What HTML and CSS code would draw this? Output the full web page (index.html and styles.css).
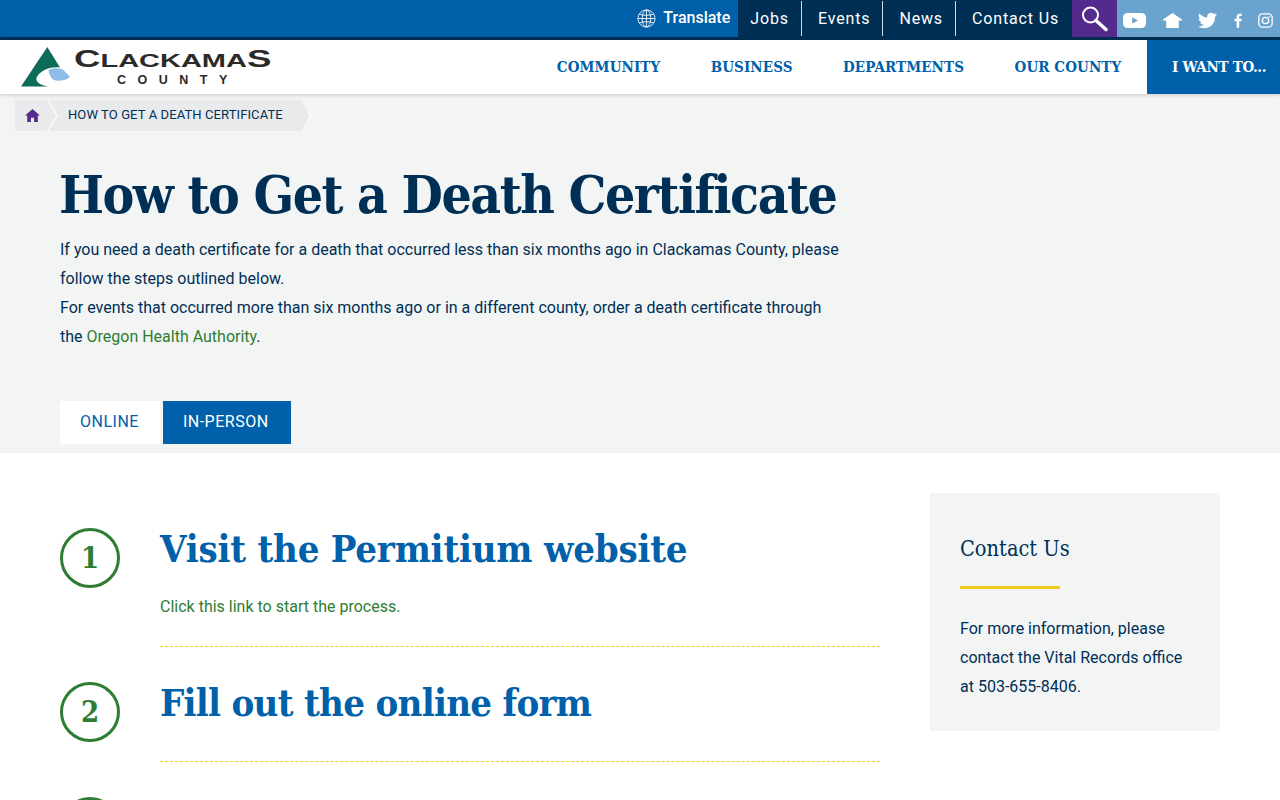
FILE: index.html
```html
<!DOCTYPE html>
<html lang="en">
<head>
<meta charset="utf-8">
<title>How to Get a Death Certificate</title>
<link rel="stylesheet" href="styles.css">
</head>
<body>
<header class="topbar">
  <a class="translate"><svg class="globe" viewBox="0 0 20 20" width="19" height="19"><g fill="none" stroke="#fff" stroke-width=".9"><circle cx="10" cy="10" r="9"/><ellipse cx="10" cy="10" rx="4.500" ry="9"/><path d="M10 1v18M1 10h18M2.500 5.500c4 1.500 11 1.500 15 0M2.500 14.500c4-1.500 11-1.500 15 0"/></g></svg><span class="translate-label">Translate</span></a>
  <nav class="utility">
    <a class="util-link first">Jobs</a>
    <a class="util-link">Events</a>
    <a class="util-link">News</a>
    <a class="util-link last">Contact Us</a>
  </nav>
  <a class="search"><svg viewBox="0 0 28 28" width="28" height="28"><circle cx="10.500" cy="10" r="7.500" fill="none" stroke="#fff" stroke-width="2"/><path d="M16 15.500l10 9" stroke="#fff" stroke-width="3.400" stroke-linecap="round"/></svg></a>
  <div class="social">
    <svg viewBox="0 0 23 15" width="23" height="15"><rect width="23" height="15" rx="4.500" fill="#fff"/><path d="M9.200 4.300l5.600 3.200-5.600 3.200z" fill="#6ba3cf"/></svg>
    <svg viewBox="0 0 19 15" width="19" height="15"><path d="M9.500 0L19 6.500V7.500H15.800V15H3.200V7.500H0V6.500z" fill="#fff"/></svg>
    <svg viewBox="0 0 24 24" width="19" height="19"><path fill="#fff" d="M23.950 4.570a10 10 0 0 1-2.820.770 4.960 4.960 0 0 0 2.160-2.720c-.950.550-2 .950-3.130 1.190a4.920 4.920 0 0 0-8.380 4.480C7.690 8.090 4.070 6.130 1.640 3.160a4.820 4.820 0 0 0-.67 2.480c0 1.710.870 3.210 2.190 4.100a4.900 4.900 0 0 1-2.230-.620v.060a4.920 4.920 0 0 0 3.950 4.830 5 5 0 0 1-2.210.080 4.940 4.940 0 0 0 4.600 3.420A9.870 9.870 0 0 1 0 19.540a14 14 0 0 0 7.560 2.210c9.050 0 14-7.500 14-13.980 0-.210 0-.420-.020-.630a9.940 9.940 0 0 0 2.460-2.550z"/></svg>
    <svg viewBox="0 0 10 18" width="8" height="15"><path fill="#fff" d="M6.500 18V10h2.700l.400-3.100H6.500V5c0-.900.250-1.500 1.550-1.500H9.700V.700C9.400.660 8.400.600 7.300.600 4.900.600 3.300 2 3.300 4.700v2.200H.600V10h2.700v8z"/></svg>
    <svg viewBox="0 0 18 18" width="15" height="15"><g fill="none" stroke="#fff" stroke-width="1.600"><rect x="1" y="1" width="16" height="16" rx="4.500"/><circle cx="9" cy="9" r="3.800"/></g><circle cx="13.500" cy="4.500" r="1" fill="#fff"/></svg>
  </div>
</header>

<div class="mainnav">
  <a class="logo">
    <svg class="logo-mark" viewBox="0 0 50 40" width="50" height="40"><path d="M26.300 0L39 20.500C29 19 18 24 15.500 31C14.500 35 20 38.500 27 39.500H0z" fill="#0d6b5a"/><path d="M27.500 23C33 20.500 40 21 43 23.500L49 30C44 34 36 35 32 32.500C29.500 30.500 28 27 27.500 23z" fill="#8dbde6"/></svg>
    <span class="logo-text"><span class="logo-top">C<small>LACKAMA</small>S</span><span class="logo-bottom">COUNTY</span></span>
  </a>
  <nav class="primary">
    <a class="primary-link">COMMUNITY</a>
    <a class="primary-link">BUSINESS</a>
    <a class="primary-link">DEPARTMENTS</a>
    <a class="primary-link">OUR COUNTY</a>
    <a class="iwant">I WANT TO...</a>
  </nav>
</div>

<section class="hero">
  <div class="crumbs">
    <a class="crumb-home"><svg viewBox="0 0 16 14" width="15" height="13"><path d="M8 0l8 7h-2.300v7H9.700V9.500H6.300V14H2.300V7H0z" fill="#542a8c"/></svg></a>
    <span class="crumb-current">HOW TO GET A DEATH CERTIFICATE</span>
  </div>
  <div class="hero-body">
    <h1 class="page-title">How to Get a Death Certificate</h1>
    <p class="intro">If you need a death certificate for a death that occurred less than six months ago in Clackamas County, please follow the steps outlined below.<br>For events that occurred more than six months ago or in a different county, order a death certificate through the <a class="link">Oregon Health Authority</a>.</p>
    <div class="tabs">
      <a class="tab">ONLINE</a>
      <a class="tab active">IN-PERSON</a>
    </div>
  </div>
</section>

<main class="content">
  <div class="steps">
    <article class="step">
      <div class="num">1</div>
      <div class="step-body">
        <h2 class="step-title wide">Visit the Permitium website</h2>
        <p class="step-text"><a class="link">Click this link to start the process.</a></p>
      </div>
    </article>
    <article class="step">
      <div class="num">2</div>
      <div class="step-body short">
        <h2 class="step-title tight">Fill out the online form</h2>
      </div>
    </article>
    <article class="step">
      <div class="num"></div>
    </article>
  </div>
  <aside class="contact">
    <h3 class="contact-title">Contact Us</h3>
    <div class="rule"></div>
    <p class="contact-text">For more information, please contact the Vital Records office at 503-655-8406.</p>
  </aside>
</main>
</body>
</html>
```
FILE: styles.css
```css
* { box-sizing: border-box; }
html, body { margin: 0; padding: 0; }
body {
  font-family: Roboto, "Liberation Sans", sans-serif;
  color: #002f56;
  background: #fff;
  overflow: hidden;
  height: 800px;
}
a { color: inherit; text-decoration: none; }

.topbar {
  height: 40px;
  display: flex;
  justify-content: flex-end;
  background: #0060a9;
  border-bottom: 3px solid #002f56;
  color: #fff;
}
.translate {
  display: flex;
  align-items: center;
  gap: 7px;
  width: 101px;
  font-size: 16px;
  font-weight: 500;
}
.translate-label { padding-bottom: 2px; }
.globe { flex: none; }
.utility { display: flex; background: #002f56; padding: 0 13px 0 0; height: 37px; }
.util-link {
  display: flex;
  align-items: center;
  padding: 0 12px 0 16px;
  margin: 1px 0;
  border-right: 1px solid #cdd8e2;
  font-size: 16px;
  letter-spacing: 0.85px;
}
.util-link.first { padding-left: 12px; }
.util-link.last { border-right: 0; padding-right: 0; }
.search {
  width: 45px;
  background: #542a8c;
  display: flex;
  align-items: center;
  justify-content: center;
  padding-right: 2px;
}
.social {
  width: 163px;
  background: #6ba3cf;
  display: flex;
  align-items: center;
  padding: 3px 7px 0 6px;
  justify-content: space-between;
}

.mainnav {
  height: 54px;
  display: flex;
  justify-content: space-between;
  background: #fff;
  box-shadow: 0 1px 4px rgba(0,0,0,.18);
  position: relative;
}
.logo { display: flex; align-items: flex-start; padding: 7px 0 0 21px; }
.logo-mark { flex: none; }
.logo-text { display: flex; flex-direction: column; margin-left: 3px; padding-top: 1px; color: #2b2a29; font-family: "Liberation Sans", sans-serif; font-weight: 700; }
.logo-top {
  font-size: 24px;
  line-height: 22px;
  transform: scaleX(1.525);
  transform-origin: left;
  white-space: nowrap;
}
.logo-top small { font-size: 19px; }
.logo-bottom { font-size: 12.500px; letter-spacing: 11.500px; line-height: 14px; margin: 1px 0 0 43px; white-space: nowrap; }
.primary { display: flex; align-items: stretch; }
.primary-link {
  display: flex;
  align-items: center;
  padding: 0 25.750px 1px 24.750px;
  color: #0060a9;
  font-family: "DejaVu Serif", "Liberation Serif", serif;
  font-stretch: condensed;
  font-weight: 700;
  font-size: 15px;
  letter-spacing: .1px;
}
.iwant {
  display: flex;
  align-items: center;
  width: 133px;
  padding: 0 0 1px 25px;
  background: #0060a9;
  color: #fff;
  font-family: "DejaVu Serif", "Liberation Serif", serif;
  font-stretch: condensed;
  font-weight: 700;
  font-size: 15px;
  letter-spacing: -.3px;
  white-space: nowrap;
}

.hero { height: 359px; background: #f3f5f5; padding: 6px 0 0 15px; }
.crumbs { display: flex; height: 31px; width: max-content; background: #e8eaeb; position: relative; }
.crumb-home { width: 32px; display: flex; align-items: center; justify-content: center; padding-left: 2px; }
.crumb-current {
  display: flex;
  align-items: center;
  padding: 0 19px 2px 21px;
  font-size: 13px;
  font-weight: 400;
  letter-spacing: .1px;
  height: 31px;
}
.crumbs::before, .crumbs::after, .crumb-current::after {
  content: "";
  position: absolute;
  top: 0;
  height: 31px;
}
.crumbs::before {
  left: 32px;
  width: 12px;
  background: #f7f8f8;
  clip-path: polygon(0 0, 2px 0, 11px 50%, 2px 100%, 0 100%, 9px 50%);
}
.crumbs::after {
  right: -8px;
  width: 8px;
  background: #e8eaeb;
  clip-path: polygon(0 0, 100% 50%, 0 100%);
}
.crumb-current::after {
  right: -10px;
  width: 10px;
  background: #fafbfb;
  clip-path: polygon(0 0, 100% 50%, 0 100%);
}
.hero-body { padding: 0 0 0 45px; }
.page-title {
  margin: 31px 0 0 -1px;
  font-family: "DejaVu Serif", "Liberation Serif", serif;
  font-stretch: condensed;
  font-weight: 700;
  font-size: 53px;
  line-height: 64px;
  color: #002f56;
  letter-spacing: -1.500px;
  white-space: nowrap;
}
.intro {
  margin: 9px 0 0;
  width: 785px;
  font-size: 16px;
  line-height: 29px;
}
.link { color: #2e7d32; }
.tabs { display: flex; margin-top: 50px; height: 43px; }
.tab {
  display: flex;
  align-items: center;
  padding: 0 21px 3px 20px;
  background: #fff;
  color: #0060a9;
  font-size: 16px;
  letter-spacing: .5px;
  margin-right: 3px;
}
.tab.active { background: #0060a9; color: #fff; margin-right: 0; padding-right: 22px; }

.content { display: flex; justify-content: space-between; padding: 40px 60px 0; }
.steps { width: 820px; }
.step { display: flex; }
.num {
  flex: none;
  width: 60px;
  height: 60px;
  margin-top: 35px;
  margin-right: 40px;
  border: 3px solid #2e7d32;
  border-radius: 50%;
  display: flex;
  align-items: center;
  justify-content: center;
  color: #2e7d32;
  font-family: "DejaVu Serif", "Liberation Serif", serif;
  font-stretch: condensed;
  font-weight: 700;
  font-size: 29px;
}
.step-body { width: 720px; border-bottom: 1px dashed #f5ca1e; padding-top: 31px; min-height: 154px; }
.step-body.short { min-height: 115px; }
.step-title {
  margin: 0;
  font-family: "DejaVu Serif", "Liberation Serif", serif;
  font-stretch: condensed;
  font-weight: 700;
  font-size: 38px;
  line-height: 50px;
  color: #0060a9;
  white-space: nowrap;
}
.step-title.wide { letter-spacing: -.220px; }
.step-title.tight { letter-spacing: -.720px; }
.step-text { margin: 18px 0 0; font-size: 16px; line-height: 29px; }

.contact { width: 290px; height: 238px; background: #f3f5f5; padding: 40px 30px 0; }
.contact-title {
  margin: 0;
  font-family: "DejaVu Serif", "Liberation Serif", serif;
  font-stretch: condensed;
  font-weight: 400;
  font-size: 21.600px;
  line-height: 32px;
  color: #002f56;
}
.rule { width: 100px; height: 3px; background: #f5ca1e; margin-top: 21px; }
.contact-text { margin: 25px 0 0; font-size: 16px; line-height: 29px; }
```
